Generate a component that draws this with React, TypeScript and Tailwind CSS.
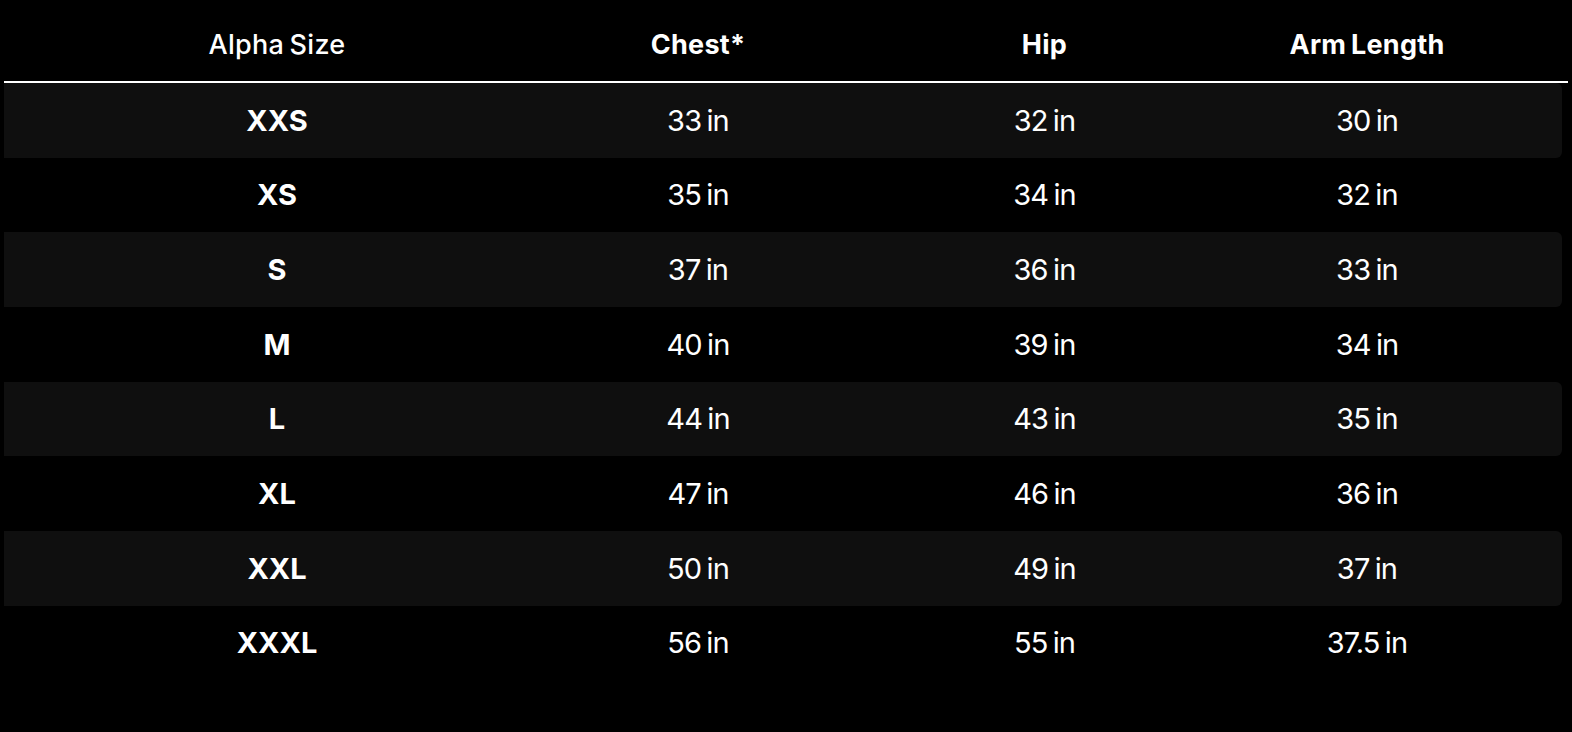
const ROWS = [
  { size: 'XXS', chest: '33 in', hip: '32 in', arm: '30 in' },
  { size: 'XS', chest: '35 in', hip: '34 in', arm: '32 in' },
  { size: 'S', chest: '37 in', hip: '36 in', arm: '33 in' },
  { size: 'M', chest: '40 in', hip: '39 in', arm: '34 in' },
  { size: 'L', chest: '44 in', hip: '43 in', arm: '35 in' },
  { size: 'XL', chest: '47 in', hip: '46 in', arm: '36 in' },
  { size: 'XXL', chest: '50 in', hip: '49 in', arm: '37 in' },
  { size: 'XXXL', chest: '56 in', hip: '55 in', arm: '37.5 in' },
]

const COLS = 'grid grid-cols-[546px_296px_397px_248px] items-center text-center'

export default function App() {
  return (
    <div className="min-h-[732px] w-full bg-black px-1 font-['Inter',sans-serif] text-white">
      <div className={`${COLS} h-[83px] border-b-2 border-white pt-[10px] text-[27px] tracking-[0.01em] [word-spacing:-2px]`}>
        <div className="font-[450]">Alpha Size</div>
        <div className="font-bold">Chest*</div>
        <div className="font-bold">Hip</div>
        <div className="font-bold">Arm Length</div>
      </div>
      <div className="flex w-[1558px] flex-col">
        {ROWS.map((r, i) => (
          <div
            key={r.size}
            className={`${COLS} h-[74.7px] rounded-r-md ${i % 2 === 0 ? 'bg-[#0f0f0f]' : ''}`}
          >
            <div className="text-[29px] font-bold">{r.size}</div>
            <div className="text-[29px] tracking-[-0.03em] [word-spacing:-2px]">{r.chest}</div>
            <div className="text-[29px] tracking-[-0.03em] [word-spacing:-2px]">{r.hip}</div>
            <div className="text-[29px] tracking-[-0.03em] [word-spacing:-2px]">{r.arm}</div>
          </div>
        ))}
      </div>
    </div>
  )
}
